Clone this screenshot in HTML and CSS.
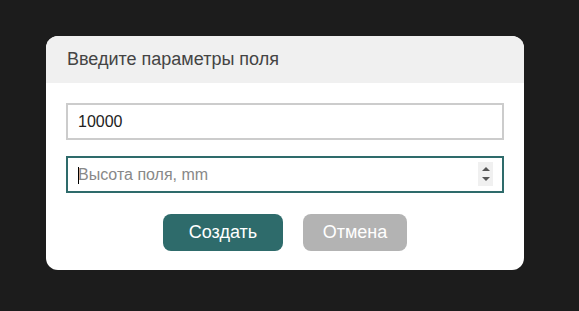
FILE: index.html
```html
<!DOCTYPE html>
<html lang="ru">
<head>
    <meta charset="UTF-8">
    <meta name="viewport" content="width=device-width, initial-scale=1.0">
    <title>Параметры поля</title>
    <link rel="stylesheet" href="styles.css">
</head>
<body>
    <div class="overlay">
        <div class="dialog">
            <div class="dialog__header">Введите параметры поля</div>
            <div class="dialog__body">
                <input type="number" class="field-input" value="10000" placeholder="Ширина поля, mm">
                <div class="input-wrap">
                    <input type="number" class="field-input field-input--active" placeholder="Высота поля, mm">
                    <span class="caret"></span>
                    <span class="spinner">
                        <span class="spinner__up"></span>
                        <span class="spinner__down"></span>
                    </span>
                </div>
                <div class="dialog__buttons">
                    <button class="btn btn--create">Создать</button>
                    <button class="btn btn--cancel">Отмена</button>
                </div>
            </div>
        </div>
    </div>
</body>
</html>
```
FILE: styles.css
```css
body {
    margin: 0;
    background-color: #1c1c1c;
    font-family: "Liberation Sans", Arial, sans-serif;
}

.overlay {
    width: 579px;
    height: 311px;
    display: flex;
    align-items: flex-start;
    padding: 36px 0 0 46px;
    box-sizing: border-box;
}

.dialog {
    width: 478px;
    background-color: #fff;
    border-radius: 12px;
    overflow: hidden;
}

.dialog__header {
    height: 47px;
    line-height: 47px;
    background-color: #f0f0f0;
    padding-left: 21px;
    font-size: 18px;
    color: #444;
}

.dialog__body {
    padding: 20px 20px 19px;
    display: flex;
    flex-direction: column;
    gap: 16px;
}

.field-input {
    width: 100%;
    height: 37px;
    box-sizing: border-box;
    border: 2px solid #ccc;
    padding: 0 10px;
    font-family: inherit;
    font-size: 16px;
    color: #222;
    outline: none;
    -moz-appearance: textfield;
}

.field-input::-webkit-inner-spin-button,
.field-input::-webkit-outer-spin-button {
    -webkit-appearance: none;
    margin: 0;
}

.field-input::placeholder {
    color: #888;
}

.field-input--active {
    border-color: #2e6b6b;
}

.input-wrap {
    position: relative;
}

.caret {
    position: absolute;
    left: 12px;
    top: 11px;
    width: 1px;
    height: 17px;
    background-color: #000;
}

.spinner {
    position: absolute;
    right: 11px;
    top: 6px;
    width: 15px;
    height: 24px;
    background-color: #f0f0f0;
    display: flex;
    flex-direction: column;
    align-items: center;
    justify-content: center;
    gap: 6px;
}

.spinner__up,
.spinner__down {
    width: 0;
    height: 0;
    border-left: 4px solid transparent;
    border-right: 4px solid transparent;
}

.spinner__up {
    border-bottom: 4px solid #555;
}

.spinner__down {
    border-top: 4px solid #555;
}

.dialog__buttons {
    display: flex;
    justify-content: center;
    gap: 20px;
    margin-top: 5px;
}

.btn {
    height: 37px;
    border: none;
    border-radius: 8px;
    color: #fff;
    font-family: inherit;
    font-size: 18px;
    cursor: pointer;
}

.btn--create {
    width: 120px;
    background-color: #2e6b6b;
}

.btn--cancel {
    width: 104px;
    background-color: #b3b3b3;
}
```
